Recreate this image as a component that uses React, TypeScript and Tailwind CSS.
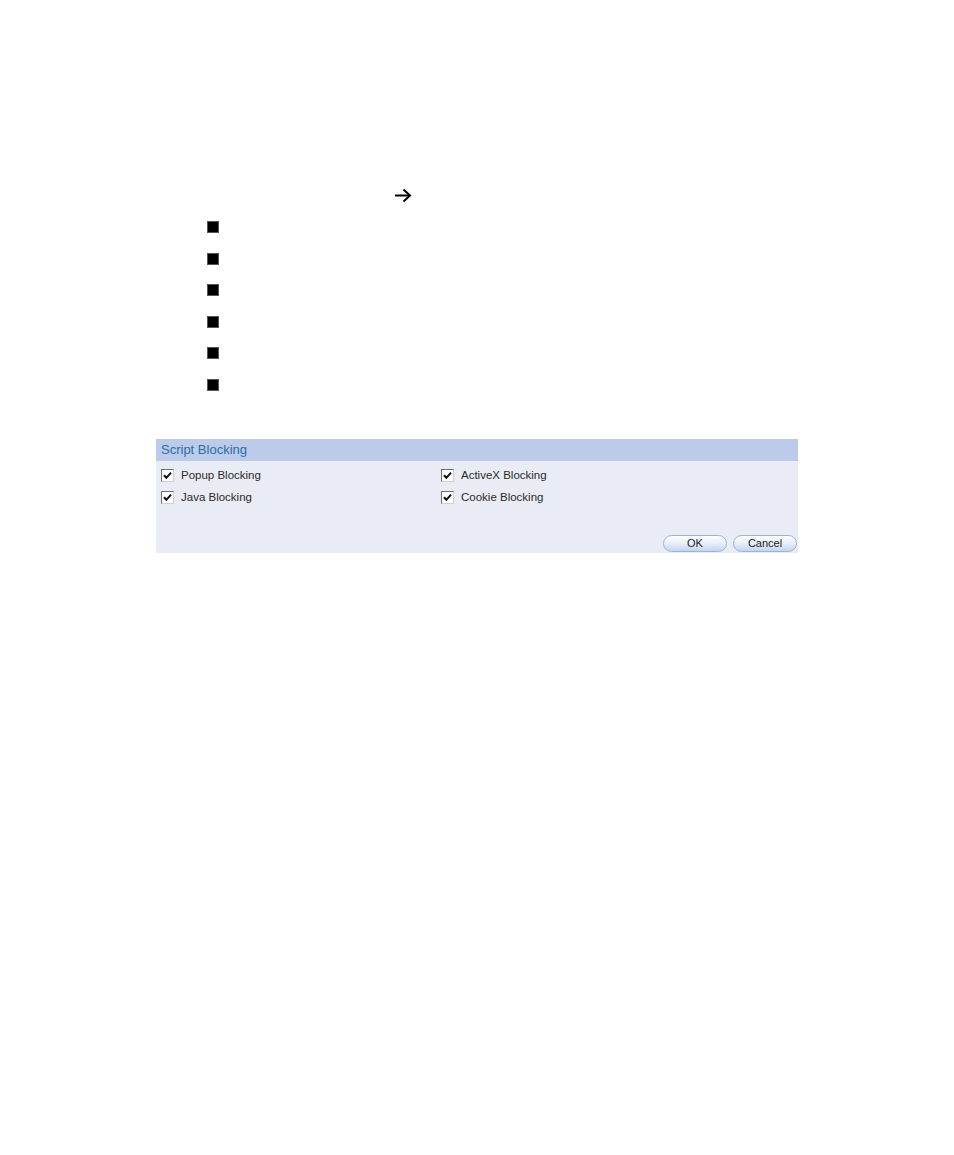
// Script Blocking settings panel with bullet list above

const FONT = '"Liberation Sans", Arial, sans-serif'

function Arrow() {
  return (
    <svg width="18" height="15" viewBox="0 0 18 15" aria-hidden="true">
      <path d="M1 7.5 H16" stroke="#000" strokeWidth="2" fill="none" />
      <path d="M9.5 1.5 L16 7.5 L9.5 13.5" stroke="#000" strokeWidth="2" fill="none" />
    </svg>
  )
}

function Bullet() {
  return <div className="w-[12px] h-[12px] bg-black border border-[#555]" />
}

function CheckBox() {
  return (
    <span className="inline-flex w-[13px] h-[13px] bg-white border border-t-[#6f6f6f] border-l-[#6f6f6f] border-b-[#d0d0d0] border-r-[#d0d0d0] items-center justify-center shrink-0">
      <svg width="9" height="9" viewBox="0 0 9 9" aria-hidden="true">
        <path d="M1 4.2 L3.4 6.8 L8 1.6" stroke="#111" strokeWidth="2" fill="none" />
      </svg>
    </span>
  )
}

function Option({ label }: { label: string }) {
  return (
    <div className="flex items-center gap-[7px] h-[22px]">
      <CheckBox />
      <span className="text-[11.5px] text-[#2a2a2a] leading-none">{label}</span>
    </div>
  )
}

function PillButton({ label }: { label: string }) {
  return (
    <button className="w-[64px] h-[17px] rounded-full border border-[#9fb3d2] bg-gradient-to-b from-white via-[#e6eefa] to-[#c4d5ee] text-[11px] text-[#222] leading-none">
      {label}
    </button>
  )
}

export default function App() {
  return (
    <div className="w-[954px] h-[1155px] bg-white" style={{ fontFamily: FONT }}>
      <div className="pt-[188px] pl-[394px] h-[202px]">
        <Arrow />
      </div>
      <div className="pl-[207px] pt-[19px] flex flex-col gap-[19.6px]">
        {Array.from({ length: 6 }).map((_, i) => (
          <Bullet key={i} />
        ))}
      </div>

      <div className="ml-[156px] mt-[48px] w-[642px] h-[114px] flex flex-col bg-[#e9ecf5]">
        <div className="h-[22px] bg-[#bccbea] flex items-center pl-[5px]">
          <span className="text-[13px] text-[#2a6ea8]">Script Blocking</span>
        </div>
        <div className="flex-1 flex flex-col pl-[5px] pr-[1px] pt-[4px] pb-[1px]">
          <div className="grid grid-cols-[280px_1fr]">
            <Option label="Popup Blocking" />
            <Option label="ActiveX Blocking" />
            <Option label="Java Blocking" />
            <Option label="Cookie Blocking" />
          </div>
          <div className="mt-auto flex justify-end gap-[6px]">
            <PillButton label="OK" />
            <PillButton label="Cancel" />
          </div>
        </div>
      </div>
    </div>
  )
}
